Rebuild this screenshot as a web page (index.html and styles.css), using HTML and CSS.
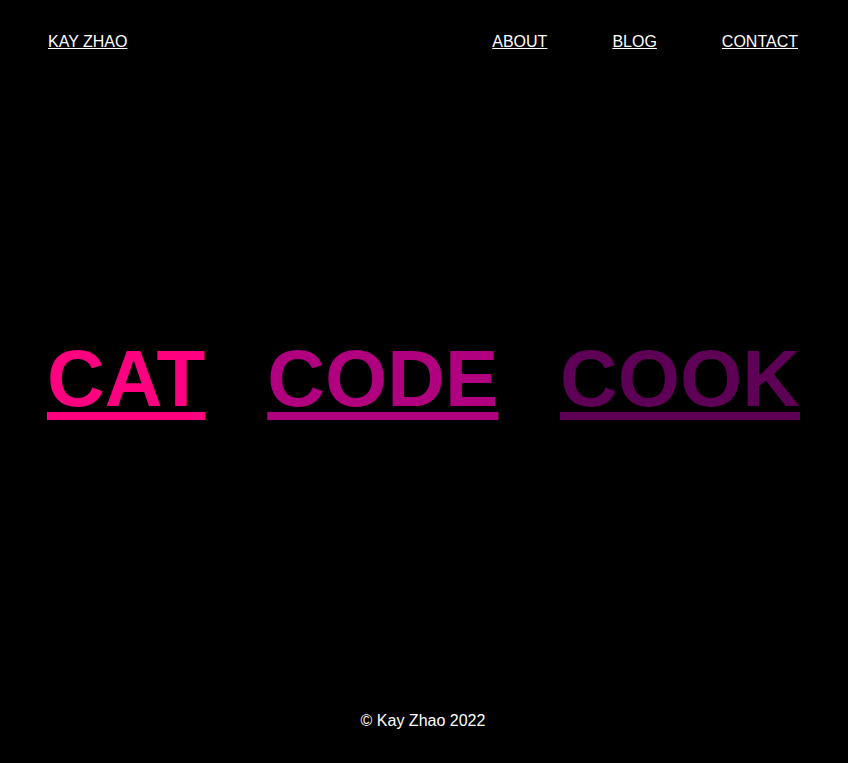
FILE: index.html
```html
<!DOCTYPE html>
<html lang="en">
<head>
<meta charset="utf-8">
<title>Kay Zhao</title>
<link rel="stylesheet" href="styles.css">
</head>
<body>
<div class="page">
  <header class="site-header">
    <a class="brand" href="#">KAY ZHAO</a>
    <nav class="nav">
      <a href="#">ABOUT</a>
      <a href="#">BLOG</a>
      <a href="#">CONTACT</a>
    </nav>
  </header>
  <main class="hero">
    <a class="word word-cat" href="#">CAT</a>
    <a class="word word-code" href="#">CODE</a>
    <a class="word word-cook" href="#">COOK</a>
  </main>
  <footer class="site-footer">© Kay Zhao 2022</footer>
</div>
</body>
</html>
```
FILE: styles.css
```css
* { box-sizing: border-box; }
html, body {
  margin: 0;
  padding: 0;
  background: #000;
  color: #fff;
  font-family: "Liberation Sans", Arial, sans-serif;
  font-size: 16px;
}
.page {
  min-height: 100vh;
  display: flex;
  flex-direction: column;
  padding: 33px 50px 33px 48px;
}
.site-header {
  display: flex;
  justify-content: space-between;
  align-items: center;
}
.site-header a {
  color: #fff;
  text-decoration: underline;
}
.nav {
  display: flex;
  gap: 65px;
}
.hero {
  flex: 1;
  display: flex;
  justify-content: space-between;
  align-items: center;
  margin-right: -2px;
  margin-left: -1px;
  padding-bottom: 6px;
}
.word {
  font-size: 80px;
  font-weight: bold;
  text-decoration: underline;
  text-decoration-thickness: 8px;
  text-underline-offset: 6px;
}
.word-cat { color: #ff0080; }
.word-code { color: #b0007f; }
.word-cook { color: #5e0055; }
.site-footer {
  text-align: center;
}
```
